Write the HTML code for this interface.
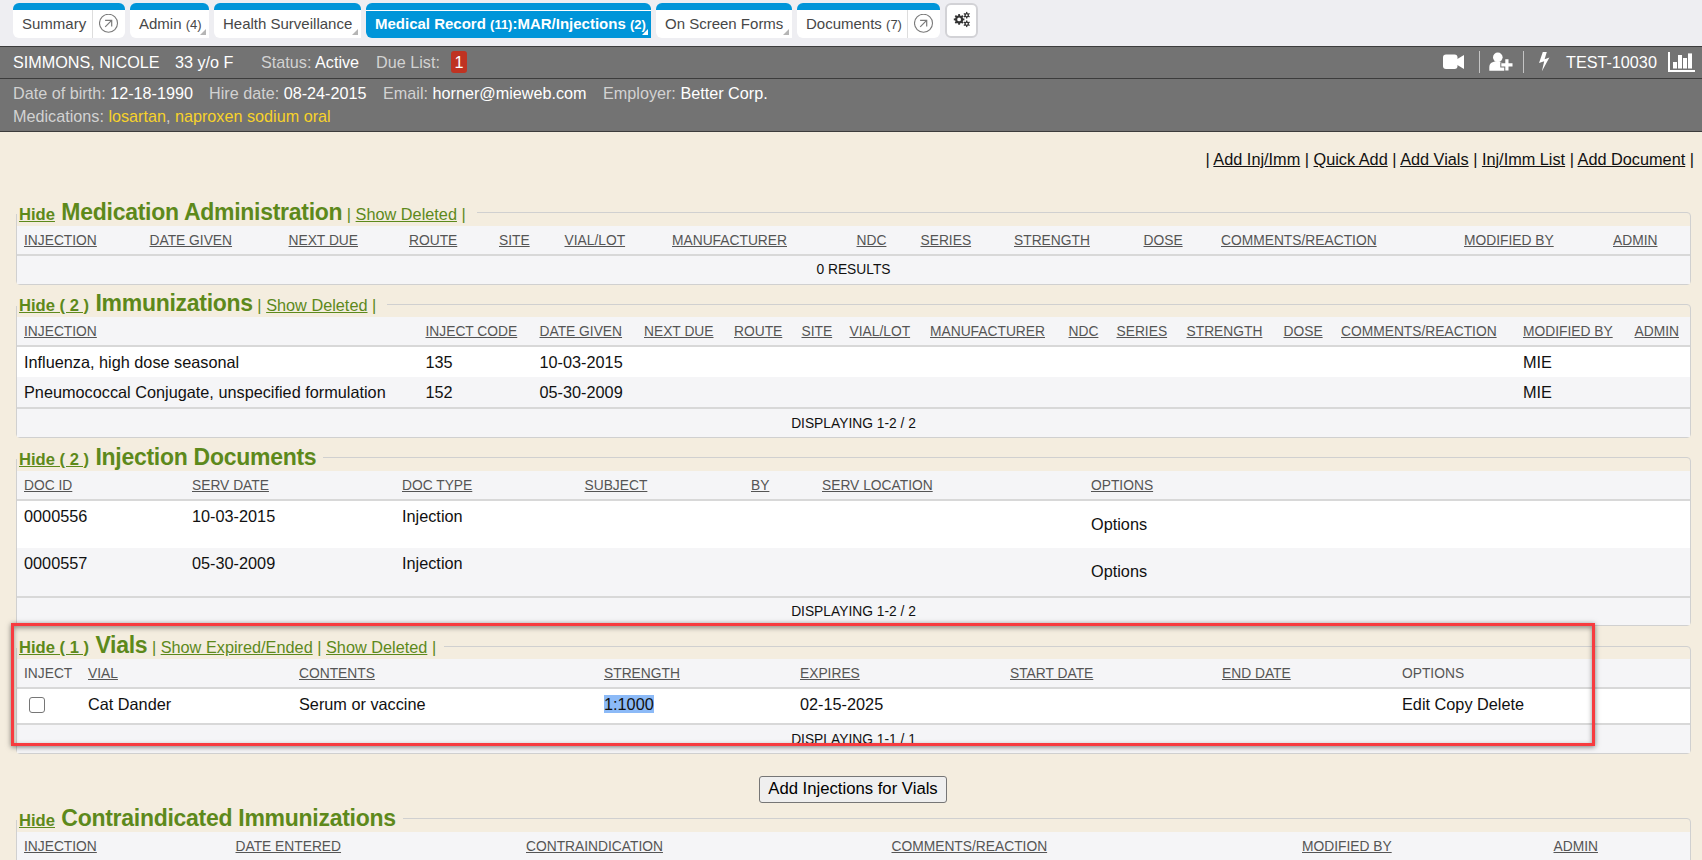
<!DOCTYPE html>
<html><head><meta charset="utf-8">
<style>
*{box-sizing:border-box;}
html,body{margin:0;padding:0;}
body{width:1702px;height:860px;overflow:hidden;position:relative;background:#f4eddf;font-family:"Liberation Sans",sans-serif;color:#111;}
.abs{position:absolute;white-space:nowrap;}
#topbar{position:absolute;left:0;top:0;width:1702px;height:46px;background:#eeeef2;}
.tab{position:absolute;top:3px;height:35px;background:#fff;border-radius:6px;border-top:7px solid #0095d9;font-size:15px;color:#474747;}
.tab .t{position:absolute;top:5px;}
.tab small{font-size:13px;}
.tab.active{background:#0095d9;color:#fff;font-weight:bold;box-shadow:inset 0 1px 0 #fff;}
.tab.sq{border-bottom-right-radius:0;}
.tri{position:absolute;right:3px;bottom:3px;width:0;height:0;border-left:6px solid transparent;border-bottom:6px solid #b5b5b5;}
.active .tri{border-bottom-color:#fff;}
.sep{position:absolute;top:0;bottom:0;width:1px;background:#ddd;}
#pbar{position:absolute;left:0;top:46px;width:1702px;height:86px;background:#737373;border-top:1px solid #3c3c3c;border-bottom:1px solid #3c3c3c;}
#pbar .l{color:#d2d2d2;}
#pbar .v{color:#fff;}
#pbar .y{color:#f7d22a;}

.fs{position:absolute;left:16px;width:1675px;border:1px solid #d0d0d0;border-radius:0 4px 4px 4px;}
.lgbg{position:absolute;left:15px;height:9px;background:#f4eddf;}
.lg{position:absolute;left:19px;white-space:nowrap;font-size:23px;line-height:26px;font-weight:bold;color:#5d891b;}
.lg .tt{letter-spacing:-0.28px;}
.lg .hd16{font-size:16.6px;font-weight:bold;}
.lg .s16{font-size:16.3px;font-weight:normal;}
.hd{position:absolute;left:17px;width:1673px;background:#f5f5f7;border-bottom:2px solid #d8d8d8;}
.hc{position:absolute;white-space:nowrap;font-size:13.8px;line-height:16px;color:#555;text-decoration:underline;}
.hc.nu{text-decoration:none;}
.rw{position:absolute;left:17px;width:1673px;}
.rc{position:absolute;white-space:nowrap;font-size:16.27px;line-height:18px;color:#111;}
.sp{position:absolute;left:17px;width:1673px;height:2px;background:#d8d8d8;}
.ft{position:absolute;left:17px;width:1673px;background:#f5f5f7;text-align:center;font-size:13.8px;color:#111;}
.sel{background:#8cbaf7;}
.cb{position:absolute;width:16px;height:16px;border:1px solid #767676;border-radius:3px;background:#fff;}
.hl{position:absolute;left:11px;top:623px;width:1584px;height:123px;border:3px solid #f73b3f;box-shadow:0 1px 5px rgba(0,0,0,.5), inset 0 2px 5px rgba(0,0,0,.4);}
.btn{position:absolute;left:759px;top:776px;width:188px;height:27px;border:1px solid #767676;border-radius:3px;background:#efefef;font-size:16.7px;line-height:23px;text-align:center;color:#000;}

</style></head><body>
<div id="topbar">
  <div class="tab" style="left:13px;width:112px;"><span class="t" style="left:9px;">Summary</span><div class="sep" style="left:79px;top:0;"></div>
    <svg class="abs" style="left:86px;top:4px;" width="20" height="20" viewBox="0 0 20 20"><circle cx="9.5" cy="9.3" r="9" fill="none" stroke="#7a7a7a" stroke-width="1.1"/><path d="M6.2 12.8 L12.4 6.6 M6.1 6.3 H12.7 V12.6" fill="none" stroke="#7a7a7a" stroke-width="1.2"/></svg></div>
  <div class="tab sq" style="left:130px;width:79px;"><span class="t" style="left:9px;">Admin <small>(4)</small></span><div class="tri"></div></div>
  <div class="tab sq" style="left:214px;width:147px;"><span class="t" style="left:9px;">Health Surveillance</span><div class="tri"></div></div>
  <div class="tab active sq" style="left:366px;width:285px;"><span class="t" style="left:9px;">Medical Record <small>(11)</small>:MAR/Injections <small>(2)</small></span><div class="tri"></div></div>
  <div class="tab sq" style="left:656px;width:136px;"><span class="t" style="left:9px;">On Screen Forms</span><div class="tri"></div></div>
  <div class="tab" style="left:797px;width:143px;"><span class="t" style="left:9px;">Documents <small>(7)</small></span><div class="sep" style="left:110px;"></div>
    <svg class="abs" style="left:117px;top:4px;" width="20" height="20" viewBox="0 0 20 20"><circle cx="9.5" cy="9.3" r="9" fill="none" stroke="#7a7a7a" stroke-width="1.1"/><path d="M6.2 12.8 L12.4 6.6 M6.1 6.3 H12.7 V12.6" fill="none" stroke="#7a7a7a" stroke-width="1.2"/></svg></div>
  <div class="abs" style="left:945px;top:3px;width:33px;height:35px;background:#fff;border:2px solid #d2d2d6;border-radius:6px;">
    <svg class="abs" style="left:0;top:0;" width="29" height="31" viewBox="947 5 29 31">
      <g><circle cx="959.1" cy="19.4" r="2.95" fill="none" stroke="#333" stroke-width="2.10"/>
<rect x="958.15" y="14.10" width="1.9" height="2.10" fill="#333" transform="rotate(0.0 959.1 19.4)"/>
<rect x="958.15" y="14.10" width="1.9" height="2.10" fill="#333" transform="rotate(45.0 959.1 19.4)"/>
<rect x="958.15" y="14.10" width="1.9" height="2.10" fill="#333" transform="rotate(90.0 959.1 19.4)"/>
<rect x="958.15" y="14.10" width="1.9" height="2.10" fill="#333" transform="rotate(135.0 959.1 19.4)"/>
<rect x="958.15" y="14.10" width="1.9" height="2.10" fill="#333" transform="rotate(180.0 959.1 19.4)"/>
<rect x="958.15" y="14.10" width="1.9" height="2.10" fill="#333" transform="rotate(225.0 959.1 19.4)"/>
<rect x="958.15" y="14.10" width="1.9" height="2.10" fill="#333" transform="rotate(270.0 959.1 19.4)"/>
<rect x="958.15" y="14.10" width="1.9" height="2.10" fill="#333" transform="rotate(315.0 959.1 19.4)"/>
<circle cx="966.7" cy="15.2" r="1.65" fill="none" stroke="#333" stroke-width="1.30"/>
<rect x="966.05" y="11.90" width="1.3" height="1.80" fill="#333" transform="rotate(0.0 966.7 15.2)"/>
<rect x="966.05" y="11.90" width="1.3" height="1.80" fill="#333" transform="rotate(60.0 966.7 15.2)"/>
<rect x="966.05" y="11.90" width="1.3" height="1.80" fill="#333" transform="rotate(120.0 966.7 15.2)"/>
<rect x="966.05" y="11.90" width="1.3" height="1.80" fill="#333" transform="rotate(180.0 966.7 15.2)"/>
<rect x="966.05" y="11.90" width="1.3" height="1.80" fill="#333" transform="rotate(240.0 966.7 15.2)"/>
<rect x="966.05" y="11.90" width="1.3" height="1.80" fill="#333" transform="rotate(300.0 966.7 15.2)"/>
<circle cx="966.7" cy="23.8" r="1.65" fill="none" stroke="#333" stroke-width="1.30"/>
<rect x="966.05" y="20.50" width="1.3" height="1.80" fill="#333" transform="rotate(0.0 966.7 23.8)"/>
<rect x="966.05" y="20.50" width="1.3" height="1.80" fill="#333" transform="rotate(60.0 966.7 23.8)"/>
<rect x="966.05" y="20.50" width="1.3" height="1.80" fill="#333" transform="rotate(120.0 966.7 23.8)"/>
<rect x="966.05" y="20.50" width="1.3" height="1.80" fill="#333" transform="rotate(180.0 966.7 23.8)"/>
<rect x="966.05" y="20.50" width="1.3" height="1.80" fill="#333" transform="rotate(240.0 966.7 23.8)"/>
<rect x="966.05" y="20.50" width="1.3" height="1.80" fill="#333" transform="rotate(300.0 966.7 23.8)"/></g>
    </svg>
  </div>
</div>

<div id="pbar">
  <div class="abs" style="left:0;top:31px;width:1702px;height:1px;background:#3c3c3c;"></div>
  <div class="abs" style="left:13px;top:6px;font-size:16.2px;"><span class="v">SIMMONS, NICOLE</span></div>
  <div class="abs" style="left:175px;top:6px;font-size:16.2px;"><span class="v">33 y/o F</span></div>
  <div class="abs" style="left:261px;top:6px;font-size:16.2px;"><span class="l">Status:</span> <span class="v">Active</span></div>
  <div class="abs" style="left:376px;top:6px;font-size:16.2px;"><span class="l">Due List:</span></div>
  <div class="abs" style="left:451px;top:4px;width:16px;height:22px;background:#bf3322;border-radius:3px;color:#fff;font-size:16.2px;text-align:center;line-height:22px;">1</div>
  <svg class="abs" style="left:0;top:-47px;" width="1702" height="80" viewBox="0 0 1702 80">
    <rect x="1443" y="54.6" width="14.5" height="14.3" rx="3" fill="#fff"/>
    <path d="M1456.5 59.5 L1464 55 L1464 69 L1456.5 64.5 Z" fill="#fff"/>
    <rect x="1479" y="51" width="1" height="22" fill="#c4c4c4"/>
    <circle cx="1497.8" cy="57.3" r="4.8" fill="#fff"/>
    <path d="M1489.3 70.8 L1489.3 67 C1489.3 63.5 1492.5 61.3 1497 61.3 C1501.5 61.3 1504.8 63.5 1504.8 67 L1504.8 70.8 Z" fill="#fff"/>
    <path d="M1504.3 58.2 h5.2 v4 h4 v5.2 h-4 v4 h-5.2 v-4 h-4 v-5.2 h4 z" fill="#737373"/>
    <path d="M1505.3 59.2 h3.2 v4 h4 v3.2 h-4 v4 h-3.2 v-4 h-4 v-3.2 h4 z" fill="#fff"/>
    <rect x="1523" y="51" width="1" height="22" fill="#c4c4c4"/>
    <path d="M1542.8 52 L1546.8 52 L1544.6 59.2 L1549.4 57.4 L1541.9 71.3 L1544.2 61.2 L1539 62.9 Z" fill="#fff"/>
    <rect x="1668" y="52" width="2" height="20" fill="#fff"/>
    <rect x="1668" y="70" width="27" height="2" fill="#fff"/>
    <rect x="1673" y="62" width="4" height="6.5" fill="#fff"/>
    <rect x="1678" y="55" width="4" height="13.5" fill="#fff"/>
    <rect x="1683" y="58" width="4" height="10.5" fill="#fff"/>
    <rect x="1688" y="53.4" width="4" height="15.1" fill="#fff"/>
  </svg>
  <div class="abs" style="left:1566px;top:6px;font-size:16.2px;color:#fff;">TEST-10030</div>
  <div class="abs" style="left:13px;top:37px;font-size:16.2px;"><span class="l">Date of birth:</span> <span class="v">12-18-1990</span></div>
  <div class="abs" style="left:209px;top:37px;font-size:16.2px;"><span class="l">Hire date:</span> <span class="v">08-24-2015</span></div>
  <div class="abs" style="left:383px;top:37px;font-size:16.2px;"><span class="l">Email:</span> <span class="v">horner@mieweb.com</span></div>
  <div class="abs" style="left:603px;top:37px;font-size:16.2px;"><span class="l">Employer:</span> <span class="v">Better Corp.</span></div>
  <div class="abs" style="left:13px;top:60px;font-size:16.2px;"><span class="l">Medications:</span> <span class="y">losartan</span><span class="l">,</span> <span class="y">naproxen sodium oral</span></div>
</div>


<div class="abs" style="right:8px;top:150px;font-size:16.3px;color:#111;">| <u>Add Inj/Imm</u> | <u>Quick Add</u> | <u>Add Vials</u> | <u>Inj/Imm List</u> | <u>Add Document</u> |</div>
<div class="fs" style="top:212px;height:73px;"></div>
<div class="lgbg" style="top:205px;width:462px;"></div>
<div class="lg" style="top:199px;"><u class="hd16">Hide</u> <span class="tt">Medication Administration</span><span class="s16"> | <u>Show Deleted</u> |</span></div>
<div class="hd" style="top:226px;height:30px;"></div>
<div class="hc" style="left:24px;top:233px;">INJECTION</div>
<div class="hc" style="left:149.5px;top:233px;">DATE GIVEN</div>
<div class="hc" style="left:288.5px;top:233px;">NEXT DUE</div>
<div class="hc" style="left:409px;top:233px;">ROUTE</div>
<div class="hc" style="left:499px;top:233px;">SITE</div>
<div class="hc" style="left:564.5px;top:233px;">VIAL/LOT</div>
<div class="hc" style="left:672px;top:233px;">MANUFACTURER</div>
<div class="hc" style="left:856.5px;top:233px;">NDC</div>
<div class="hc" style="left:920.5px;top:233px;">SERIES</div>
<div class="hc" style="left:1014px;top:233px;">STRENGTH</div>
<div class="hc" style="left:1143.5px;top:233px;">DOSE</div>
<div class="hc" style="left:1221px;top:233px;">COMMENTS/REACTION</div>
<div class="hc" style="left:1464px;top:233px;">MODIFIED BY</div>
<div class="hc" style="left:1613px;top:233px;">ADMIN</div>
<div class="ft" style="top:256px;height:28px;"><span style="position:absolute;left:0;right:0;top:6px;line-height:16px;">0 RESULTS</span></div>
<div class="fs" style="top:304px;height:134px;"></div>
<div class="lgbg" style="top:297px;width:372px;"></div>
<div class="lg" style="top:290px;"><u class="hd16">Hide ( 2 )</u> <span class="tt">Immunizations</span><span class="s16"> | <u>Show Deleted</u> |</span></div>
<div class="hd" style="top:317px;height:30px;"></div>
<div class="hc" style="left:24px;top:324px;">INJECTION</div>
<div class="hc" style="left:425.5px;top:324px;">INJECT CODE</div>
<div class="hc" style="left:539.5px;top:324px;">DATE GIVEN</div>
<div class="hc" style="left:644px;top:324px;">NEXT DUE</div>
<div class="hc" style="left:734px;top:324px;">ROUTE</div>
<div class="hc" style="left:801.5px;top:324px;">SITE</div>
<div class="hc" style="left:849.5px;top:324px;">VIAL/LOT</div>
<div class="hc" style="left:930px;top:324px;">MANUFACTURER</div>
<div class="hc" style="left:1068.5px;top:324px;">NDC</div>
<div class="hc" style="left:1116.5px;top:324px;">SERIES</div>
<div class="hc" style="left:1186.5px;top:324px;">STRENGTH</div>
<div class="hc" style="left:1283.5px;top:324px;">DOSE</div>
<div class="hc" style="left:1341px;top:324px;">COMMENTS/REACTION</div>
<div class="hc" style="left:1523px;top:324px;">MODIFIED BY</div>
<div class="hc" style="left:1634.5px;top:324px;">ADMIN</div>
<div class="rw" style="top:347px;height:30px;background:#fff;"></div>
<div class="rc" style="left:24px;top:353px;">Influenza, high dose seasonal</div>
<div class="rc" style="left:425.5px;top:353px;">135</div>
<div class="rc" style="left:539.5px;top:353px;">10-03-2015</div>
<div class="rc" style="left:1523px;top:353px;">MIE</div>
<div class="rw" style="top:377px;height:30px;background:#f5f5f7;"></div>
<div class="rc" style="left:24px;top:383px;">Pneumococcal Conjugate, unspecified formulation</div>
<div class="rc" style="left:425.5px;top:383px;">152</div>
<div class="rc" style="left:539.5px;top:383px;">05-30-2009</div>
<div class="rc" style="left:1523px;top:383px;">MIE</div>
<div class="sp" style="top:407px;"></div>
<div class="ft" style="top:409px;height:28px;"><span style="position:absolute;left:0;right:0;top:7px;line-height:16px;">DISPLAYING 1-2 / 2</span></div>
<div class="fs" style="top:457px;height:169px;"></div>
<div class="lgbg" style="top:450px;width:308px;"></div>
<div class="lg" style="top:444px;"><u class="hd16">Hide ( 2 )</u> <span class="tt">Injection Documents</span></div>
<div class="hd" style="top:471px;height:30px;"></div>
<div class="hc" style="left:24px;top:478px;">DOC ID</div>
<div class="hc" style="left:192px;top:478px;">SERV DATE</div>
<div class="hc" style="left:402px;top:478px;">DOC TYPE</div>
<div class="hc" style="left:584.5px;top:478px;">SUBJECT</div>
<div class="hc" style="left:751px;top:478px;">BY</div>
<div class="hc" style="left:822px;top:478px;">SERV LOCATION</div>
<div class="hc" style="left:1091px;top:478px;">OPTIONS</div>
<div class="rw" style="top:501px;height:47px;background:#fff;"></div>
<div class="rc" style="left:24px;top:507px;">0000556</div>
<div class="rc" style="left:192px;top:507px;">10-03-2015</div>
<div class="rc" style="left:402px;top:507px;">Injection</div>
<div class="rc" style="left:1091px;top:515px;">Options</div>
<div class="rw" style="top:548px;height:48px;background:#f5f5f7;"></div>
<div class="rc" style="left:24px;top:554px;">0000557</div>
<div class="rc" style="left:192px;top:554px;">05-30-2009</div>
<div class="rc" style="left:402px;top:554px;">Injection</div>
<div class="rc" style="left:1091px;top:562px;">Options</div>
<div class="sp" style="top:596px;"></div>
<div class="ft" style="top:598px;height:27px;"><span style="position:absolute;left:0;right:0;top:6px;line-height:16px;">DISPLAYING 1-2 / 2</span></div>
<div class="fs" style="top:646px;height:108px;"></div>
<div class="lgbg" style="top:639px;width:429px;"></div>
<div class="lg" style="top:632px;"><u class="hd16">Hide ( 1 )</u> <span class="tt">Vials</span><span class="s16"> | <u>Show Expired/Ended</u> | <u>Show Deleted</u> |</span></div>
<div class="hd" style="top:659px;height:30px;"></div>
<div class="hc nu" style="left:24px;top:666px;">INJECT</div>
<div class="hc" style="left:88px;top:666px;">VIAL</div>
<div class="hc" style="left:299px;top:666px;">CONTENTS</div>
<div class="hc" style="left:604px;top:666px;">STRENGTH</div>
<div class="hc" style="left:800px;top:666px;">EXPIRES</div>
<div class="hc" style="left:1010px;top:666px;">START DATE</div>
<div class="hc" style="left:1222px;top:666px;">END DATE</div>
<div class="hc nu" style="left:1402px;top:666px;">OPTIONS</div>
<div class="rw" style="top:689px;height:34px;background:#fff;"></div>
<div class="rc" style="left:88px;top:695px;">Cat Dander</div>
<div class="rc" style="left:299px;top:695px;">Serum or vaccine</div>
<div class="rc" style="left:604px;top:695px;"><span class="sel">1:1000</span></div>
<div class="rc" style="left:800px;top:695px;">02-15-2025</div>
<div class="rc" style="left:1402px;top:695px;">Edit Copy Delete</div>
<div class="cb" style="left:29px;top:697px;"></div>
<div class="sp" style="top:723px;"></div>
<div class="ft" style="top:725px;height:28px;"><span style="position:absolute;left:0;right:0;top:7px;line-height:16px;">DISPLAYING 1-1 / 1</span></div>
<div class="hl"></div>
<div class="btn">Add Injections for Vials</div>
<div class="fs" style="top:818px;height:83px;"></div>
<div class="lgbg" style="top:811px;width:388px;"></div>
<div class="lg" style="top:805px;"><u class="hd16">Hide</u> <span class="tt">Contraindicated Immunizations</span></div>
<div class="hd" style="top:832px;height:30px;"></div>
<div class="hc" style="left:24px;top:839px;">INJECTION</div>
<div class="hc" style="left:235.5px;top:839px;">DATE ENTERED</div>
<div class="hc" style="left:526px;top:839px;">CONTRAINDICATION</div>
<div class="hc" style="left:891.5px;top:839px;">COMMENTS/REACTION</div>
<div class="hc" style="left:1302px;top:839px;">MODIFIED BY</div>
<div class="hc" style="left:1553.5px;top:839px;">ADMIN</div>
</body></html>
